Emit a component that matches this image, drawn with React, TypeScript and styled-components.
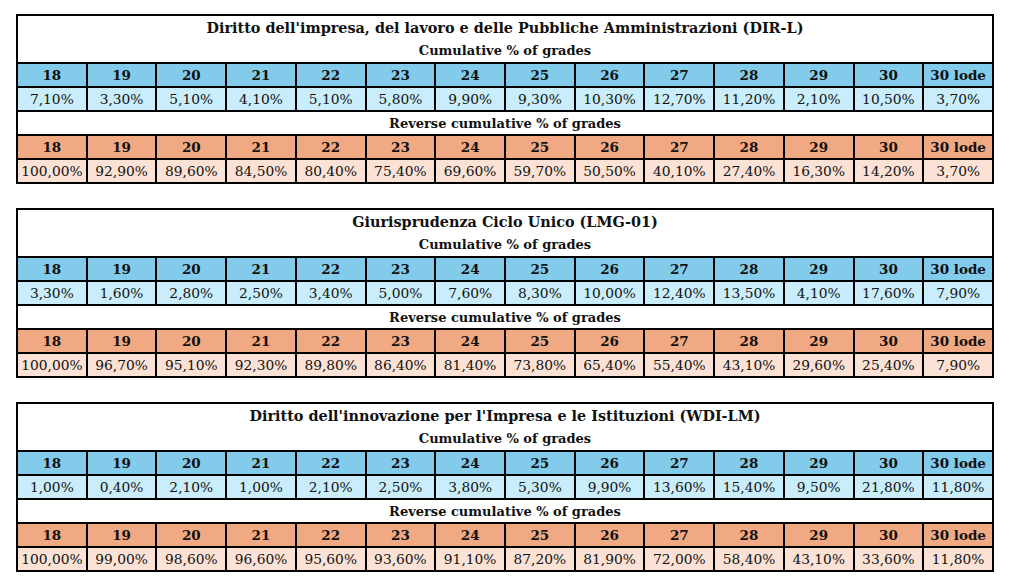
import React from "react";
import styled, { createGlobalStyle } from "styled-components";

const GlobalStyle = createGlobalStyle`
  html, body {
    margin: 0;
    padding: 0;
    background: #ffffff;
  }
  body {
    font-family: "DejaVu Serif", "Liberation Serif", serif;
    color: #111111;
  }
`;

const Page = styled.div`
  width: 978px;
  padding: 14px 0 0 16px;
`;

const Sheet = styled.div<{ $last?: boolean }>`
  display: grid;
  grid-template-columns: repeat(14, 1fr);
  gap: 2px;
  padding: 2px;
  background: #000000;
  margin-bottom: ${(p) => (p.$last ? "0" : "24px")};
`;

const TitleBlock = styled.div`
  grid-column: 1 / -1;
  height: 46px;
  background: #ffffff;
  display: flex;
  flex-direction: column;
  align-items: center;
  justify-content: flex-start;
`;

const Title = styled.div`
  font-weight: bold;
  font-size: 14.4px;
  line-height: 24px;
`;

const Subtitle = styled.div`
  font-weight: bold;
  font-size: 13px;
  line-height: 21px;
`;

const LabelRow = styled.div`
  grid-column: 1 / -1;
  height: 22px;
  background: #ffffff;
  display: flex;
  align-items: center;
  justify-content: center;
  font-weight: bold;
  font-size: 13px;
`;

type Tone = "blueHead" | "blue" | "orangeHead" | "orange";

const tones: Record<Tone, string> = {
  blueHead: "#83cbeb",
  blue: "#caedfb",
  orangeHead: "#f1a983",
  orange: "#fbe2d5",
};

const Cell = styled.div<{ $tone: Tone; $bold?: boolean }>`
  height: 22px;
  background: ${(p) => tones[p.$tone]};
  display: flex;
  align-items: center;
  justify-content: center;
  font-size: ${(p) => (p.$bold ? "13.5px" : "13.8px")};
  font-weight: ${(p) => (p.$bold ? "bold" : "normal")};
  white-space: nowrap;
`;

const grades = ["18", "19", "20", "21", "22", "23", "24", "25", "26", "27", "28", "29", "30", "30 lode"];

type Course = { name: string; cumulative: string[]; reverse: string[] };

const courses: Course[] = [
  {
    name: "Diritto dell'impresa, del lavoro e delle Pubbliche Amministrazioni (DIR-L)",
    cumulative: ["7,10%", "3,30%", "5,10%", "4,10%", "5,10%", "5,80%", "9,90%", "9,30%", "10,30%", "12,70%", "11,20%", "2,10%", "10,50%", "3,70%"],
    reverse: ["100,00%", "92,90%", "89,60%", "84,50%", "80,40%", "75,40%", "69,60%", "59,70%", "50,50%", "40,10%", "27,40%", "16,30%", "14,20%", "3,70%"],
  },
  {
    name: "Giurisprudenza Ciclo Unico (LMG-01)",
    cumulative: ["3,30%", "1,60%", "2,80%", "2,50%", "3,40%", "5,00%", "7,60%", "8,30%", "10,00%", "12,40%", "13,50%", "4,10%", "17,60%", "7,90%"],
    reverse: ["100,00%", "96,70%", "95,10%", "92,30%", "89,80%", "86,40%", "81,40%", "73,80%", "65,40%", "55,40%", "43,10%", "29,60%", "25,40%", "7,90%"],
  },
  {
    name: "Diritto dell'innovazione per l'Impresa e le Istituzioni (WDI-LM)",
    cumulative: ["1,00%", "0,40%", "2,10%", "1,00%", "2,10%", "2,50%", "3,80%", "5,30%", "9,90%", "13,60%", "15,40%", "9,50%", "21,80%", "11,80%"],
    reverse: ["100,00%", "99,00%", "98,60%", "96,60%", "95,60%", "93,60%", "91,10%", "87,20%", "81,90%", "72,00%", "58,40%", "43,10%", "33,60%", "11,80%"],
  },
];

function GradeTable({ course, last }: { course: Course; last?: boolean }) {
  return (
    <Sheet $last={last}>
      <TitleBlock>
        <Title>{course.name}</Title>
        <Subtitle>Cumulative % of grades</Subtitle>
      </TitleBlock>
      {grades.map((g) => (
        <Cell key={"h" + g} $tone="blueHead" $bold>{g}</Cell>
      ))}
      {course.cumulative.map((v, i) => (
        <Cell key={"c" + i} $tone="blue">{v}</Cell>
      ))}
      <LabelRow>Reverse cumulative % of grades</LabelRow>
      {grades.map((g) => (
        <Cell key={"o" + g} $tone="orangeHead" $bold>{g}</Cell>
      ))}
      {course.reverse.map((v, i) => (
        <Cell key={"r" + i} $tone="orange">{v}</Cell>
      ))}
    </Sheet>
  );
}

export default function App() {
  return (
    <>
      <GlobalStyle />
      <Page>
        {courses.map((c, i) => (
          <GradeTable key={c.name} course={c} last={i === courses.length - 1} />
        ))}
      </Page>
    </>
  );
}
